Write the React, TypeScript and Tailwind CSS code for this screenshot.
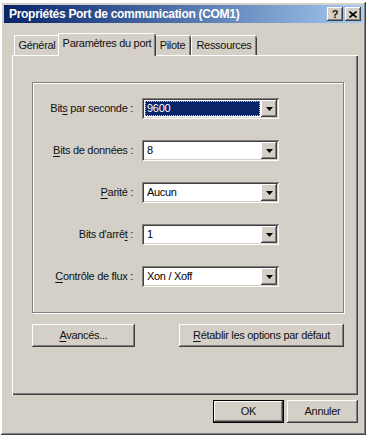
import React from "react";

const font = "font-['Liberation_Sans',Arial,sans-serif]";
const raised =
  "shadow-[inset_-1px_-1px_#404040,inset_1px_1px_#ffffff,inset_-2px_-2px_#808080,inset_2px_2px_#d4d0c8]";
const sunken =
  "shadow-[inset_1px_1px_#808080,inset_-1px_-1px_#ffffff,inset_2px_2px_#404040,inset_-2px_-2px_#d4d0c8]";

const rows = [
  { pre: "Bit", key: "s", post: " par seconde :", value: "9600", focused: true },
  { pre: "", key: "B", post: "its de données :", value: "8" },
  { pre: "", key: "P", post: "arité :", value: "Aucun" },
  { pre: "Bits d'arrê", key: "t", post: " :", value: "1" },
  { pre: "", key: "C", post: "ontrôle de flux :", value: "Xon / Xoff" },
];

const tabs = ["Général", "Paramètres du port", "Pilote", "Ressources"];

function Mnemonic({ pre, k, post }: { pre: string; k: string; post: string }) {
  return (
    <span>
      {pre}
      <span className="underline underline-offset-2">{k}</span>
      {post}
    </span>
  );
}

function DropButton() {
  return (
    <div className={`flex h-[17px] w-[16px] items-center justify-center bg-[#d4d0c8] ${raised}`}>
      <svg width="7" height="4" viewBox="0 0 7 4">
        <path d="M0 0h7L3.5 4z" fill="#000" />
      </svg>
    </div>
  );
}

function Combo({ value, focused }: { value: string; focused?: boolean }) {
  return (
    <div className={`flex h-[21px] w-[137px] bg-white p-[2px] ${sunken}`}>
      <div className="flex flex-1 items-center p-[1px]">
        {focused ? (
          <span className="flex h-full w-full items-center bg-[#0a246a] pl-[2px] text-white outline-1 outline-dotted outline-[#c8c4bc] -outline-offset-1">
            {value}
          </span>
        ) : (
          <span className="pl-[2px] text-black">{value}</span>
        )}
      </div>
      <DropButton />
    </div>
  );
}

function Button({ children, w, isDefault }: { children: React.ReactNode; w: string; isDefault?: boolean }) {
  return (
    <div
      className={`flex h-[23px] items-center justify-center bg-[#d4d0c8] ${w} ${
        isDefault
          ? "border border-black shadow-[inset_-1px_-1px_#404040,inset_1px_1px_#ffffff,inset_-2px_-2px_#808080]"
          : raised
      }`}
    >
      {children}
    </div>
  );
}

export default function App() {
  return (
    <div className={`h-[437px] w-[368px] bg-white pl-[1px] pt-[2px] text-[11px] tracking-[-0.3px] text-[#111] ${font}`}>
      <div className={`flex h-[433px] w-[365px] flex-col bg-[#d4d0c8] p-[3px] ${raised}`}>
        {/* title bar */}
        <div className="flex h-[18px] items-center bg-gradient-to-r from-[#0a246a] to-[#a6caf0] pl-[5px] pr-[2px]">
          <span className="flex-1 text-[12px] font-bold tracking-[-0.3px] text-white">
            Propriétés Port de communication (COM1)
          </span>
          <div className={`flex h-[14px] w-[16px] items-center justify-center bg-[#d4d0c8] text-[11px] font-bold tracking-normal ${raised}`}>
            ?
          </div>
          <div className={`ml-[2px] flex h-[14px] w-[16px] items-center justify-center bg-[#d4d0c8] ${raised}`}>
            <svg width="8" height="7" viewBox="0 0 8 7">
              <path d="M0.5 0.5l7 6M7.5 0.5l-7 6" stroke="#000" strokeWidth="1.6" />
            </svg>
          </div>
        </div>

        <div className="flex flex-col pl-[8px]">
          {/* tabs */}
          <div className="mt-[10px] flex h-[22px] items-end pl-[2px]">
            {tabs.map((t, i) =>
              i === 1 ? (
                <div
                  key={t}
                  className="relative z-10 -mx-[2px] -mb-[1px] flex h-[23px] w-[98px] items-center justify-center rounded-t-[2px] bg-[#d4d0c8] pb-[2px] shadow-[inset_1px_0_#ffffff,inset_0_1px_#ffffff,inset_-1px_0_#404040,inset_-2px_0_#808080]"
                >
                  {t}
                </div>
              ) : (
                <div
                  key={t}
                  className={`flex h-[20px] items-center justify-center rounded-t-[2px] bg-[#d4d0c8] pt-[1px] shadow-[inset_1px_0_#ffffff,inset_0_1px_#ffffff,inset_-1px_0_#404040,inset_-2px_0_#808080] ${
                    i === 0 ? "w-[46px]" : i === 2 ? "w-[37px]" : "w-[66px]"
                  }`}
                >
                  {t}
                </div>
              )
            )}
          </div>

          {/* tab panel */}
          <div className="flex h-[340px] w-[346px] flex-col pl-[20px] pt-[27px] shadow-[inset_1px_1px_#ffffff,inset_-1px_-1px_#404040,inset_-2px_-2px_#808080]">
            <div className="flex h-[231px] w-[312px] flex-col gap-[21px] border border-[#808080] pt-[15px] shadow-[inset_1px_1px_#ffffff,1px_1px_#ffffff]">
              {rows.map((r) => (
                <div key={r.value} className="flex h-[21px] items-center">
                  <div className="w-[100px] text-right">
                    <Mnemonic pre={r.pre} k={r.key} post={r.post} />
                  </div>
                  <div className="ml-[9px]">
                    <Combo value={r.value} focused={r.focused} />
                  </div>
                </div>
              ))}
            </div>
            <div className="mt-[11px] flex w-[312px] justify-between">
              <Button w="w-[103px]">
                <Mnemonic pre="" k="A" post="vancés..." />
              </Button>
              <Button w="w-[165px]">
                <Mnemonic pre="" k="R" post="établir les options par défaut" />
              </Button>
            </div>
          </div>

          {/* dialog buttons */}
          <div className="mt-[5px] flex w-[346px] justify-end gap-[3px]">
            <Button w="w-[71px]" isDefault>
              OK
            </Button>
            <Button w="w-[71px]">Annuler</Button>
          </div>
        </div>
      </div>
    </div>
  );
}
